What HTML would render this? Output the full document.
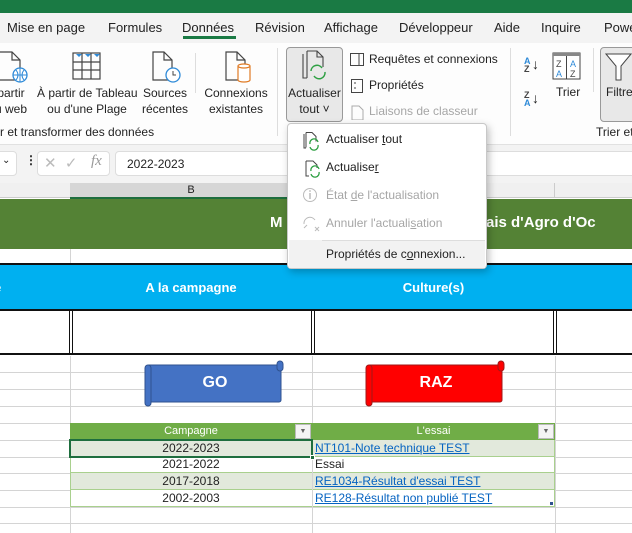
<!DOCTYPE html><html><head><meta charset="utf-8"><style>
*{margin:0;padding:0;box-sizing:border-box}
body{width:632px;height:533px;overflow:hidden;background:#f3f3f3;font-family:"Segoe UI","Liberation Sans",sans-serif;font-size:12px;color:#222;position:relative}
.a{position:absolute;white-space:nowrap}
.c{text-align:center}
.gl{position:absolute;background:#d4d4d4}
.link{color:#0563c1;text-decoration:underline}
.mi{position:absolute;left:38px;font-size:12px}
.dis{color:#a6a6a6}
</style></head><body>
<div class="a" style="left:0;top:0;width:632px;height:13px;background:#1a7a44"></div>
<div class="a" style="left:0;top:13px;width:632px;height:30px;background:#f3f3f3"></div>
<div class="a" style="left:7px;top:20px;font-size:13px">Mise en page</div>
<div class="a" style="left:108px;top:20px;font-size:13px">Formules</div>
<div class="a" style="left:182px;top:20px;font-size:13px">Données</div>
<div class="a" style="left:183px;top:36px;width:53px;height:3px;background:#1a7a44"></div>
<div class="a" style="left:255px;top:20px;font-size:13px">Révision</div>
<div class="a" style="left:324px;top:20px;font-size:13px">Affichage</div>
<div class="a" style="left:399px;top:20px;font-size:13px">Développeur</div>
<div class="a" style="left:494px;top:20px;font-size:13px">Aide</div>
<div class="a" style="left:541px;top:20px;font-size:13px">Inquire</div>
<div class="a" style="left:604px;top:20px;font-size:13px">Powe</div>
<div class="a" style="left:0;top:43px;width:632px;height:102px;background:#fdfdfd;border-bottom:1px solid #e1e1e1"></div>
<svg class="a" style="left:0;top:50px" width="290" height="34" viewBox="0 0 290 34">
<g fill="none" stroke="#444" stroke-width="1.2">
<path d="M0 2h12l8 8v20H0"/><path d="M12 2v8h8"/>
<rect x="73" y="3" width="27" height="26"/><path d="M73 12h27M73 20h27M82 3v26M91 3v26"/>
<path d="M153 2h11l8 8v20h-19z"/><path d="M164 2v8h8"/>
<path d="M226 2h11l8 8v20h-19z"/><path d="M237 2v8h8"/>
</g>
<path d="M76 4l3 3 3-3zM85 4l3 3 3-3zM94 4l3 3 3-3z" fill="#2e8ad8"/>
<circle cx="20" cy="25" r="7" fill="#fff" stroke="#2e8ad8" stroke-width="1.3"/><path d="M13 25h14M20 18v14M16 20q4 5 0 10M24 20q-4 5 0 10" stroke="#2e8ad8" fill="none"/>
<circle cx="173" cy="25" r="7" fill="#fff" stroke="#2e8ad8" stroke-width="1.3"/><path d="M173 21v4h3" stroke="#444" fill="none"/>
<path d="M238 16v14a6 2 0 0 0 12 0V16a6 2 0 0 0-12 0a6 2 0 0 0 12 0" fill="#fff" stroke="#e07b25" stroke-width="1.2"/>
</svg>
<div class="a c" style="left:-10px;top:85px;width:42px;line-height:16px">partir<br>u web</div>
<div class="a c" style="left:37px;top:85px;width:100px;line-height:16px">À partir de Tableau<br>ou d'une Plage</div>
<div class="a c" style="left:140px;top:85px;width:50px;line-height:16px">Sources<br>récentes</div>
<div class="a c" style="left:200px;top:85px;width:72px;line-height:16px">Connexions<br>existantes</div>
<div class="a" style="left:0;top:125px;font-size:12px">r et transformer des données</div>
<div class="a" style="left:195px;top:53px;width:1px;height:40px;background:#ddd"></div>
<div class="a" style="left:277px;top:48px;width:1px;height:88px;background:#ddd"></div>
<div class="a" style="left:286px;top:47px;width:57px;height:75px;background:#e8e8e8;border:1px solid #999;border-radius:4px"></div>
<svg class="a" style="left:300px;top:50px" width="30" height="32" viewBox="0 0 30 32"><g fill="none" stroke="#444" stroke-width="1.1"><path d="M3 4v24h4"/><path d="M7 1h10l6 6v10"/><path d="M7 1v27"/><path d="M17 1v6h6"/></g><path d="M11 21a6 6 0 0 1 11-3M25 22a6 6 0 0 1-11 4" stroke="#2ea043" stroke-width="1.5" fill="none"/></svg>
<div class="a c" style="left:286px;top:85px;width:57px;line-height:16px">Actualiser<br>tout ˅</div>
<svg class="a" style="left:349px;top:52px" width="16" height="68"><g fill="none" stroke="#444"><rect x="1.5" y="1.5" width="13" height="12"/><path d="M10 2v11"/><rect x="2.5" y="27.5" width="11" height="13"/><path d="M5 31h2M5 36h2"/></g><g fill="none" stroke="#aaa"><path d="M3 54h7l4 4v10H3z"/></g></svg>
<div class="a" style="left:369px;top:52px">Requêtes et connexions</div>
<div class="a" style="left:369px;top:78px">Propriétés</div>
<div class="a dis" style="left:369px;top:104px">Liaisons de classeur</div>
<div class="a" style="left:510px;top:48px;width:1px;height:88px;background:#ddd"></div>
<div class="a" style="left:524px;top:57px;font-size:9px;line-height:8px;color:#2e8ad8;font-weight:bold">A<br><span style="color:#444">Z</span></div>
<div class="a" style="left:532px;top:56px;font-size:14px">↓</div>
<div class="a" style="left:524px;top:91px;font-size:9px;line-height:8px;color:#444;font-weight:bold">Z<br><span style="color:#2e8ad8">A</span></div>
<div class="a" style="left:532px;top:90px;font-size:14px">↓</div>
<svg class="a" style="left:552px;top:52px" width="30" height="28"><rect x="1" y="1" width="27" height="26" fill="#fff" stroke="#444"/><rect x="1" y="1" width="27" height="3" fill="#888"/><path d="M14.5 4v23" stroke="#444"/><text x="4" y="15" font-size="9" fill="#444" font-family="Liberation Sans">Z</text><text x="4" y="25" font-size="9" fill="#2e8ad8" font-family="Liberation Sans">A</text><text x="18" y="15" font-size="9" fill="#2e8ad8" font-family="Liberation Sans">A</text><text x="18" y="25" font-size="9" fill="#444" font-family="Liberation Sans">Z</text></svg>
<div class="a" style="left:556px;top:85px">Trier</div>
<div class="a" style="left:593px;top:48px;width:1px;height:44px;background:#ddd"></div>
<div class="a" style="left:600px;top:47px;width:40px;height:75px;background:#e8e8e8;border:1px solid #999;border-radius:4px"></div>
<svg class="a" style="left:605px;top:52px" width="27" height="30"><path d="M1 2h25L16 14v14h-5V14z" fill="#fff" stroke="#444"/></svg>
<div class="a" style="left:606px;top:85px">Filtre</div>
<div class="a" style="left:596px;top:125px">Trier et</div>
<div class="a" style="left:-10px;top:151px;width:27px;height:25px;background:#fff;border:1px solid #ddd;border-radius:4px"></div>
<div class="a" style="left:2px;top:155px;font-size:10px">⌄</div>
<div class="a" style="left:25px;top:153px;font-weight:bold">⋮</div>
<div class="a" style="left:37px;top:151px;width:73px;height:25px;background:#fff;border:1px solid #ddd;border-radius:4px"></div>
<div class="a" style="left:44px;top:154px;color:#bbb;font-size:15px">✕ &nbsp;✓</div>
<div class="a" style="left:91px;top:153px;color:#999;font-style:italic;font-family:'Liberation Serif',serif;font-size:15px">fx</div>
<div class="a" style="left:115px;top:151px;width:530px;height:25px;background:#fff;border:1px solid #ddd;border-radius:4px"></div>
<div class="a" style="left:127px;top:157px">2022-2023</div>
<div class="a" style="left:0;top:183px;width:632px;height:350px;background:#fff"></div>
<div class="a" style="left:0;top:183px;width:632px;height:15px;background:#f0f0f0;border-bottom:1px solid #ccc"></div>
<div class="a c" style="left:70px;top:183px;width:242px;height:16px;background:#d6d6d6;border-bottom:2px solid #1e6e3e;font-size:11px;line-height:14px">B</div>
<div class="a" style="left:312px;top:183px;width:1px;height:15px;background:#ccc"></div>
<div class="a" style="left:554px;top:183px;width:1px;height:15px;background:#ccc"></div>
<div class="a" style="left:0;top:199px;width:632px;height:50px;background:#548235"></div>
<div class="a" style="left:270px;top:214px;color:#fff;font-weight:bold;font-size:15px;font-family:'Liberation Sans',sans-serif">M</div>
<div class="a" style="left:486px;top:214px;color:#fff;font-weight:bold;font-size:15px;font-family:'Liberation Sans',sans-serif">ais d'Agro d'Oc</div>
<div class="gl" style="left:70px;top:249px;width:1px;height:15px"></div>
<div class="gl" style="left:312px;top:249px;width:1px;height:15px"></div>
<div class="a" style="left:0;top:263px;width:632px;height:46px;background:#00b0f0;border-top:2px solid #111"></div>
<div class="a c" style="left:70px;top:280px;width:242px;color:#fff;font-weight:bold;font-size:13px;font-family:'Liberation Sans',sans-serif">A la campagne</div>
<div class="a c" style="left:312px;top:280px;width:243px;color:#fff;font-weight:bold;font-size:13px;font-family:'Liberation Sans',sans-serif">Culture(s)</div>
<div class="a" style="left:-6px;top:280px;color:#fff;font-weight:bold;font-size:13px">e</div>
<div class="a" style="left:0;top:309px;width:632px;height:46px;border-top:2px solid #111;border-bottom:2px solid #111"></div>
<div class="a" style="left:69px;top:309px;width:4px;height:46px;border-left:1px solid #111;border-right:1px solid #111"></div>
<div class="a" style="left:311px;top:309px;width:4px;height:46px;border-left:1px solid #111;border-right:1px solid #111"></div>
<div class="a" style="left:553px;top:309px;width:4px;height:46px;border-left:1px solid #111;border-right:1px solid #111"></div>
<div class="gl" style="left:0;top:372px;width:632px;height:1px"></div>
<div class="gl" style="left:0;top:389px;width:632px;height:1px"></div>
<div class="gl" style="left:0;top:406px;width:632px;height:1px"></div>
<div class="gl" style="left:0;top:423px;width:632px;height:1px"></div>
<div class="gl" style="left:0;top:440px;width:632px;height:1px"></div>
<div class="gl" style="left:0;top:457px;width:632px;height:1px"></div>
<div class="gl" style="left:0;top:473px;width:632px;height:1px"></div>
<div class="gl" style="left:0;top:490px;width:632px;height:1px"></div>
<div class="gl" style="left:0;top:507px;width:632px;height:1px"></div>
<div class="gl" style="left:0;top:523px;width:632px;height:1px"></div>
<div class="gl" style="left:70px;top:356px;width:1px;height:177px"></div>
<div class="gl" style="left:312px;top:356px;width:1px;height:177px"></div>
<div class="gl" style="left:555px;top:356px;width:1px;height:177px"></div>
<svg class="a" style="left:143px;top:360px" width="142" height="48"><rect x="4" y="5" width="134" height="37" rx="2" fill="#4472c4" stroke="#2f528f"/><rect x="2" y="5" width="6" height="41" rx="3" fill="#4472c4" stroke="#2f528f"/><rect x="134" y="1" width="6" height="10" rx="3" fill="#4472c4" stroke="#2f528f"/></svg>
<div class="a c" style="left:145px;top:374px;width:140px;color:#fff;font-weight:bold;font-size:16px;font-family:'Liberation Sans',sans-serif">GO</div>
<svg class="a" style="left:364px;top:360px" width="142" height="48"><rect x="4" y="5" width="134" height="37" rx="2" fill="#ff0000" stroke="#a01818"/><rect x="2" y="5" width="6" height="41" rx="3" fill="#ff0000" stroke="#a01818"/><rect x="134" y="1" width="6" height="10" rx="3" fill="#ff0000" stroke="#a01818"/></svg>
<div class="a c" style="left:366px;top:374px;width:140px;color:#fff;font-weight:bold;font-size:16px;font-family:'Liberation Sans',sans-serif">RAZ</div>
<div class="a" style="left:70px;top:423px;width:485px;height:17px;background:#70ad47"></div>
<div class="a c" style="left:70px;top:425px;width:242px;color:#fff;font-size:11px">Campagne</div>
<div class="a c" style="left:312px;top:425px;width:243px;color:#fff;font-size:11px">L'essai</div>
<div class="a" style="left:295px;top:424px;width:16px;height:15px;background:#f4f4f4;border:1px solid #bbb;font-size:7px;color:#666;text-align:center;line-height:13px">▼</div>
<div class="a" style="left:538px;top:424px;width:16px;height:15px;background:#f4f4f4;border:1px solid #bbb;font-size:7px;color:#666;text-align:center;line-height:13px">▼</div>
<div class="a" style="left:70px;top:440px;width:485px;height:17px;background:#e2e9dc;border-bottom:1px solid #a9d08e"></div>
<div class="a" style="left:70px;top:457px;width:485px;height:16px;background:#fff;border-bottom:1px solid #a9d08e"></div>
<div class="a" style="left:70px;top:473px;width:485px;height:17px;background:#e2e9dc;border-bottom:1px solid #a9d08e"></div>
<div class="a" style="left:70px;top:490px;width:485px;height:17px;background:#fff;border-bottom:1px solid #a9d08e"></div>
<div class="a" style="left:312px;top:440px;width:1px;height:67px;background:#d4d4d4"></div>
<div class="a" style="left:554px;top:440px;width:1px;height:67px;background:#a9d08e"></div>
<div class="a" style="left:70px;top:440px;width:1px;height:67px;background:#a9d08e"></div>
<div class="a" style="left:69px;top:439px;width:244px;height:19px;border:2px solid #1e6e3e"></div>
<div class="a" style="left:310px;top:455px;width:5px;height:5px;background:#1e6e3e;border:1px solid #fff"></div>
<div class="a c" style="left:70px;top:441px;width:242px;font-size:12px">2022-2023</div>
<div class="a c" style="left:70px;top:457px;width:242px;font-size:12px">2021-2022</div>
<div class="a c" style="left:70px;top:474px;width:242px;font-size:12px">2017-2018</div>
<div class="a c" style="left:70px;top:491px;width:242px;font-size:12px">2002-2003</div>
<div class="a link" style="left:315px;top:441px;font-size:12px">NT101-Note technique TEST</div>
<div class="a" style="left:315px;top:457px;font-size:12px">Essai</div>
<div class="a link" style="left:315px;top:474px;font-size:12px">RE1034-Résultat d'essai TEST</div>
<div class="a link" style="left:315px;top:491px;font-size:12px">RE128-Résultat non publié TEST</div>
<div class="a" style="left:550px;top:502px;width:3px;height:3px;background:#2f528f"></div>
<div class="a" style="left:287px;top:123px;width:200px;height:146px;background:#fff;border:1px solid #c8c8c8;border-radius:4px;box-shadow:2px 3px 8px rgba(0,0,0,.25)">
<svg class="a" style="left:14px;top:8px" width="18" height="100"><g fill="none" stroke="#444"><path d="M2 2v14h2M4 0.5h6l4 4v5M4 .5v15"/><path d="M4 29h7l4 4v3M4 29v15h3"/></g><path d="M8 12a4 4 0 0 1 8-2M16 13a4 4 0 0 1-8 2M9 39a4 4 0 0 1 8-2M17 40a4 4 0 0 1-8 2" stroke="#2ea043" stroke-width="1.3" fill="none"/><circle cx="8" cy="63" r="6.5" fill="none" stroke="#bbb"/><path d="M8 61v6" stroke="#bbb" stroke-width="1.5"/><circle cx="8" cy="59" r=".9" fill="#bbb"/><path d="M2 92a6 6 0 0 1 11-4M13 95l4 4M17 95l-4 4M2 96l3-3" stroke="#bbb" fill="none"/></svg>
<div class="mi" style="top:8px">Actualiser <u>t</u>out</div>
<div class="mi" style="top:36px">Actualise<u>r</u></div>
<div class="mi dis" style="top:64px">État <u>d</u>e l'actualisation</div>
<div class="mi dis" style="top:92px">Annuler l'actuali<u>s</u>ation</div>
<div class="a" style="left:1px;top:116px;width:196px;height:28px;background:#f2f2f2"></div>
<div class="a" style="left:34px;top:116px;width:163px;height:1px;background:#ddd"></div>
<div class="mi" style="top:123px">Propriétés de c<u>o</u>nnexion...</div>
</div>
</body></html>
